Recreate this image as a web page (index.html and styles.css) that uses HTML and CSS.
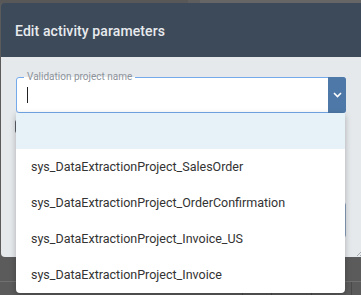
FILE: index.html
```html
<!DOCTYPE html>
<html lang="en">

<head>
  <meta charset="utf-8" />
  <title>Edit activity parameters</title>
  <meta name="viewport" content="width=device-width, initial-scale=1">
  <link rel="stylesheet" href="styles.css">
</head>

<body>
  <!-- ===== PAGE BEHIND THE MODAL ===== -->
  <div class="page">
    <div class="page-tabs">
      <span class="tab"></span>
      <span class="tab tab-results">Results</span>
    </div>
    <div class="page-grid">
      <span class="cell c1"></span><span class="cell c2"></span><span class="cell c3"></span><span class="cell c4"></span>
    </div>
  </div>

  <!-- ===== DIALOG ===== -->
  <section class="dialog">
    <header class="dialog-head">
      <h1>Edit activity parameters</h1>
    </header>
    <div class="dialog-body">
      <div class="field">
        <label>Validation project name</label>
        <div class="field-input"><span class="caret"></span></div>
        <div class="field-btn">
          <svg width="9" height="6" viewBox="0 0 9 6"><path d="M1 1l3.5 3.5L8 1" fill="none" stroke="#fff" stroke-width="1.6"/></svg>
        </div>
      </div>
      <div class="check-row"><span class="check"></span></div>
      <div class="text-box"></div>
      <svg class="grip" width="7" height="7" viewBox="0 0 7 7"><path d="M7 1L1 7M7 4L4 7" stroke="#a7adb3" stroke-width="1"/></svg>
    </div>
  </section>

  <!-- ===== OPEN DROPDOWN ===== -->
  <ul class="options">
    <li class="active">&nbsp;</li>
    <li>sys_DataExtractionProject_SalesOrder</li>
    <li>sys_DataExtractionProject_OrderConfirmation</li>
    <li>sys_DataExtractionProject_Invoice_US</li>
    <li>sys_DataExtractionProject_Invoice</li>
  </ul>
</body>
</html>
```

FILE: styles.css
```css
/* ===== RESET & BODY ===== */
* {
  box-sizing: border-box;
  margin: 0;
  padding: 0
}

body {
  font-family: Roboto, "Liberation Sans", sans-serif;
  background: #5b5b5b;
  width: 361px;
  height: 295px;
  overflow: hidden;
  position: relative
}

/* ===== PAGE BEHIND ===== */
.page {
  height: 295px;
  display: flex;
  flex-direction: column;
  justify-content: space-between
}

.page-tabs {
  display: flex;
  height: 12px;
  margin-top: -9px
}

.tab {
  width: 188px;
  background: #585858
}

.tab-results {
  flex: 1;
  background: #666;
  border-left: 12px solid #5e5e5e;
  padding-left: 15px;
  font-size: 13px;
  line-height: 10px;
  color: #2c2c2c
}

.page-grid {
  height: 14px;
  display: flex;
  border-top: 1px solid #707070;
  padding-left: 199px
}

.cell {
  border-right: 1px solid #4a4a4a
}

.c1 { width: 44px }
.c2 { width: 29px }
.c3 { width: 40px }
.c4 { width: 40px }

/* ===== DIALOG ===== */
.dialog {
  position: absolute;
  left: 1px;
  top: 3px;
  width: 363px;
  height: 254px;
  border-radius: 4px;
  overflow: hidden;
  display: flex;
  flex-direction: column
}

.dialog-head {
  height: 54px;
  background: #3d4a59;
  display: flex;
  align-items: center;
  padding: 2px 0 0 14px
}

.dialog-head h1 {
  font-size: 14px;
  font-weight: 500;
  color: #e8ebee;
  letter-spacing: 0.1px
}

.dialog-body {
  flex: 1;
  background: #e6e9ec;
  padding: 20px 17px 0 15px;
  position: relative
}

/* ===== FIELD ===== */
.field {
  position: relative;
  display: flex;
  height: 36px;
  width: 330px;
  border: 1px solid #74aaec;
  border-radius: 3px;
  background: #fff
}

.field label {
  position: absolute;
  left: 7px;
  top: -7px;
  padding: 0 3px;
  font-size: 10px;
  line-height: 12px;
  color: #8c939b;
  background: linear-gradient(#e6e9ec 50%, #fff 50%)
}

.field-input {
  flex: 1;
  display: flex;
  align-items: center;
  padding-left: 10px
}

.caret {
  width: 1px;
  height: 16px;
  background: #222
}

.field-btn {
  width: 18px;
  margin: -1px -1px -1px 0;
  background: #4e78a7;
  border-radius: 0 3px 3px 0;
  display: flex;
  align-items: center;
  justify-content: center
}

/* ===== HIDDEN CONTENT ===== */
.check-row {
  padding-top: 7px;
  margin-left: -1px
}

.check {
  display: block;
  width: 13px;
  height: 13px;
  border: 2px solid #5a5f66;
  border-radius: 2px
}

.text-box {
  margin-top: 69px;
  width: 330px;
  height: 36px;
  border: 1px solid #8ba0bd;
  border-radius: 3px
}

.grip {
  position: absolute;
  right: 1px;
  bottom: 1px
}

/* ===== DROPDOWN ===== */
.options {
  position: absolute;
  left: 16px;
  top: 113px;
  width: 329px;
  list-style: none;
  background: #fff;
  border-radius: 0 0 4px 4px;
  box-shadow: 0 2px 6px #0004;
  overflow: hidden
}

.options li {
  height: 36px;
  line-height: 36px;
  padding-left: 15px;
  font-size: 12.5px;
  color: #333;
  white-space: nowrap
}

.options li.active {
  background: #e7f1f8
}
```
